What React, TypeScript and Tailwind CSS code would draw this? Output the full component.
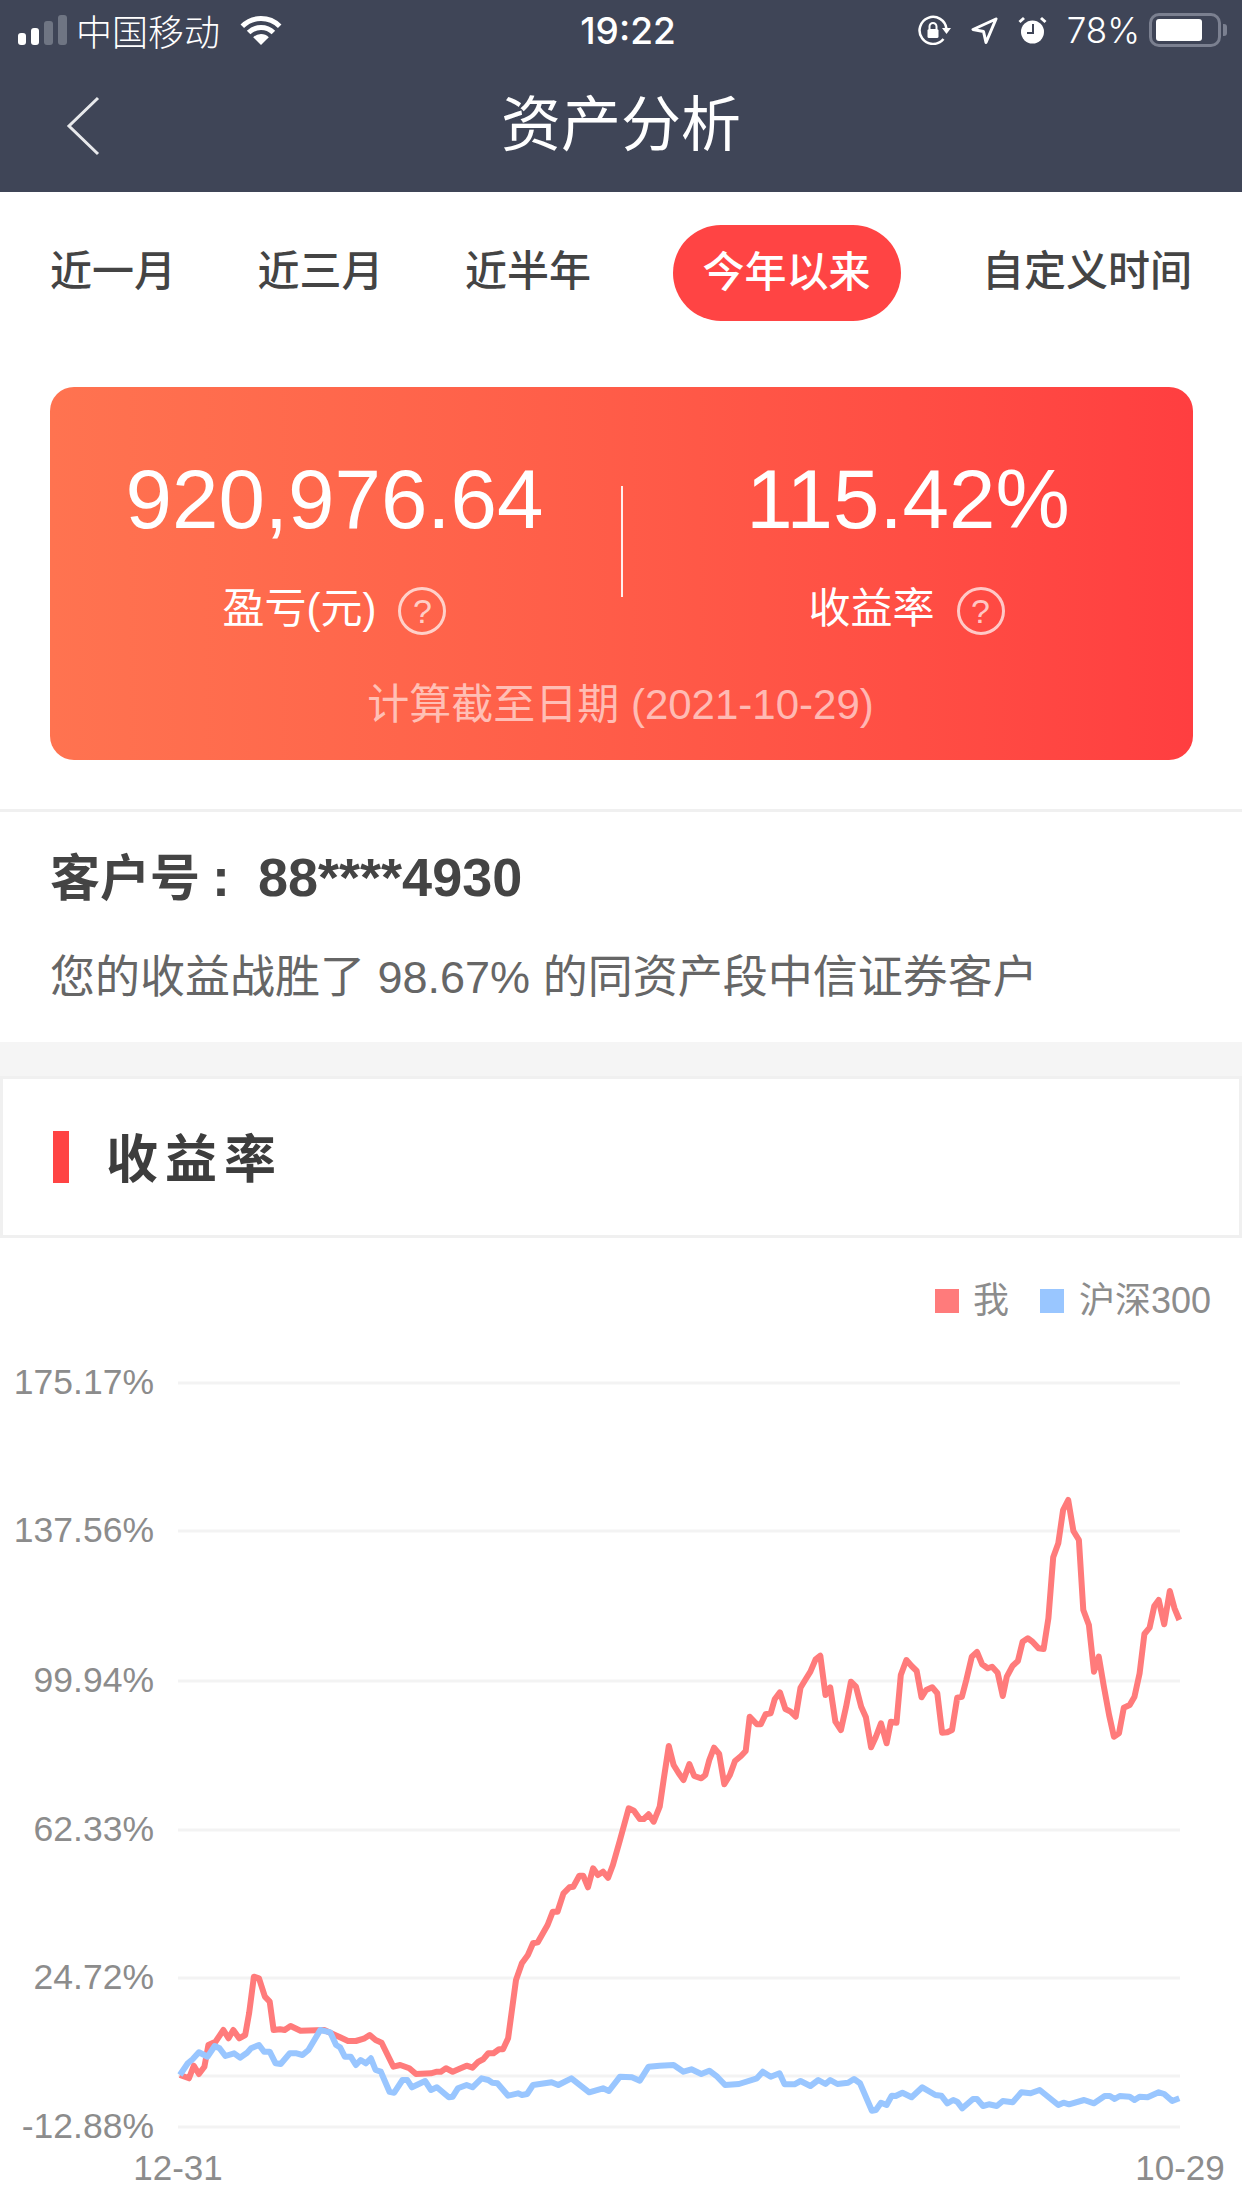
import React from 'react';

type Point = [number, number];

const tabs = ['近一月', '近三月', '近半年', '今年以来', '自定义时间'];
const activeTab = '今年以来';

const gridLines = [
  { y: 1383, label: '175.17%' },
  { y: 1531, label: '137.56%' },
  { y: 1681, label: '99.94%' },
  { y: 1830, label: '62.33%' },
  { y: 1978, label: '24.72%' },
  { y: 2127, label: '-12.88%' },
];

// traced off the reference, in crop coordinates
const redLeft: Point[] = [
  [455, 825], [478, 835], [490, 797], [503, 822], [517, 800], [527, 735], [545, 725], [565, 690], [578, 715], [590, 690],
  [605, 715], [620, 705], [630, 640], [642, 530], [655, 535], [670, 590], [682, 605], [692, 690], [708, 688], [720, 690],
  [735, 678], [760, 692], [820, 690], [860, 712], [880, 723], [900, 723], [920, 716], [935, 705], [950, 720], [965, 728],
  [995, 800], [1012, 795], [1035, 805], [1052, 822], [1090, 820], [1105, 815], [1115, 815], [1128, 805], [1145, 815],
  [1165, 805], [1180, 797], [1195, 803], [1210, 785], [1222, 778], [1235, 760], [1248, 760], [1262, 748], [1272, 748],
  [1285, 715], [1305, 540], [1320, 490], [1335, 465], [1348, 430], [1360, 427], [1385, 375], [1398, 335], [1410, 335],
  [1425, 280], [1440, 262], [1450, 260], [1465, 227], [1475, 227], [1487, 262], [1500, 205], [1512, 225], [1525, 215],
  [1538, 233], [1550, 195],
];

const redRight: Point[] = [
  [0, 1170], [22, 1075], [35, 1082], [50, 1107], [60, 1107], [72, 1093], [85, 1115], [100, 1070], [110, 990], [123, 888],
  [135, 945], [148, 970], [160, 990], [175, 942], [187, 978], [205, 985], [215, 975], [225, 930], [237, 893], [250, 912],
  [263, 1003], [277, 975], [290, 933], [305, 918], [317, 903], [327, 800], [345, 823], [355, 823], [367, 793], [380, 790],
  [390, 748], [403, 727], [417, 777], [430, 785], [443, 800], [455, 713], [467, 690], [480, 665], [493, 628], [505, 617],
  [518, 735], [530, 712], [543, 815], [557, 840], [570, 770], [582, 695], [595, 710], [608, 770], [620, 802], [633, 892],
  [645, 860], [658, 820], [672, 880], [683, 815], [697, 818], [708, 675], [722, 630], [735, 648], [748, 663], [760, 742],
  [772, 720], [787, 712], [800, 730], [812, 848], [825, 847], [837, 840], [850, 743], [862, 740], [873, 690], [887, 620],
  [900, 606], [913, 643], [927, 655], [938, 650], [952, 668], [965, 738], [975, 680], [990, 647], [1003, 633], [1015, 575],
  [1028, 565], [1040, 575], [1055, 595], [1068, 597], [1080, 505], [1092, 322], [1105, 280], [1117, 180], [1130, 150],
  [1143, 243], [1157, 270], [1168, 480], [1182, 525], [1195, 665], [1207, 620], [1220, 710], [1233, 795], [1245, 860],
  [1258, 850], [1270, 773], [1285, 765], [1297, 740], [1310, 670], [1322, 552], [1335, 533], [1347, 468], [1358, 450],
  [1372, 523], [1386, 423], [1398, 475], [1410, 510],
];

const blueLeft: Point[] = [
  [455, 825], [475, 790], [487, 778], [503, 757], [525, 770], [543, 738], [555, 745], [570, 768], [592, 760], [607, 773],
  [625, 758], [635, 745], [655, 735], [668, 755], [682, 755], [697, 790], [710, 792], [733, 760], [750, 760], [765, 765],
  [780, 750], [810, 690], [835, 697], [850, 735], [860, 742], [872, 770], [887, 770], [900, 795], [912, 780], [925, 790],
  [938, 775], [950, 810], [963, 815], [985, 875], [997, 878], [1018, 840], [1030, 840], [1042, 862], [1075, 843], [1090, 870],
  [1105, 862], [1135, 892], [1145, 890], [1158, 865], [1180, 855], [1195, 862], [1218, 835], [1235, 840], [1245, 848],
  [1258, 850], [1285, 887], [1310, 880], [1320, 885], [1333, 882], [1348, 855], [1395, 847], [1412, 855], [1445, 835],
  [1490, 877], [1525, 865], [1540, 873],
];

const blueRight: Point[] = [
  [0, 830], [30, 832], [50, 842], [72, 800], [100, 797], [135, 795], [160, 815], [180, 808], [205, 822], [225, 812],
  [245, 830], [265, 855], [300, 852], [345, 835], [360, 815], [380, 830], [402, 820], [415, 853], [440, 853], [455, 843],
  [480, 858], [500, 840], [518, 852], [530, 840], [548, 852], [575, 848], [590, 837], [605, 850], [635, 932], [645, 930],
  [658, 908], [672, 915], [685, 887], [695, 888], [712, 878], [735, 892], [762, 862], [795, 885], [810, 887], [825, 910],
  [840, 900], [850, 905], [863, 925], [890, 897], [900, 897], [915, 918], [930, 913], [950, 918], [965, 903], [990, 907],
  [1012, 877], [1035, 880], [1058, 870], [1105, 915], [1118, 908], [1132, 913], [1170, 900], [1195, 910], [1222, 888],
  [1235, 888], [1247, 897], [1260, 888], [1285, 890], [1297, 900], [1310, 890], [1330, 892], [1358, 877], [1372, 882],
  [1392, 903], [1410, 895],
];

const toPage = (pts: Point[], scaleX: number, offsetX: number, offsetY: number) =>
  pts.map(([x, y]) => `${(offsetX + x / scaleX).toFixed(1)},${(offsetY + y / 3).toFixed(1)}`).join(' ');

const redLine = `${toPage(redLeft, 2.529, 0, 1800)} ${toPage(redRight, 2.521, 620, 1450)}`;
const blueLine = `${toPage(blueLeft, 2.529, 0, 1800)} ${toPage(blueRight, 2.521, 620, 1800)}`;

function StatusBar() {
  return (
    <div className="flex h-[60px] items-center text-white font-['Inter','Noto_Sans_CJK_SC',sans-serif]">
      <div className="flex w-[576px] items-center pl-[18px]">
        <div className="flex h-[30px] items-end gap-[5px]">
          <span className="h-[12px] w-[8px] rounded-[3px] bg-white" />
          <span className="h-[17px] w-[8px] rounded-[3px] bg-white" />
          <span className="h-[24px] w-[9px] rounded-[3px] bg-[#6f7583]" />
          <span className="h-[30px] w-[9px] rounded-[3px] bg-[#6f7583]" />
        </div>
        <span className="ml-[9px] text-[36px] leading-[44px] font-['Noto_Sans_CJK_SC',sans-serif] font-light">中国移动</span>
        <svg className="ml-[20px]" width="42" height="29" viewBox="0 0 42 29" fill="none">
          <path d="M2.3 10.3A26.5 26.5 0 0 1 39.7 10.3" stroke="white" strokeWidth="5" />
          <path d="M8.6 16.6A17.5 17.5 0 0 1 33.4 16.6" stroke="white" strokeWidth="5" />
          <path d="M21 29L13.2 21.2A11 11 0 0 1 28.8 21.2Z" fill="white" />
        </svg>
      </div>
      <span className="mt-[1px] w-[104px] text-center text-[37px] font-medium leading-[44px]">19:22</span>
      <div className="flex flex-1 items-center justify-end pr-[15px]">
        <svg width="33" height="30" viewBox="0 0 33 30" fill="none">
          <path d="M25.5 24A13.5 13.5 0 1 1 28.5 14" stroke="white" strokeWidth="2.5" />
          <path d="M24 13H33L28.5 19Z" fill="white" />
          <rect x="9.5" y="14" width="11" height="9" rx="1.5" fill="white" />
          <path d="M11.5 14V11.5a3.5 3.5 0 0 1 7 0V14" stroke="white" strokeWidth="2" />
        </svg>
        <svg className="ml-[20px]" width="27" height="27" viewBox="0 0 27 27" fill="none">
          <path d="M25 2L2 12.5L12.5 14.5L15 25.5Z" stroke="white" strokeWidth="3" strokeLinejoin="round" />
        </svg>
        <svg className="ml-[20px]" width="29" height="28" viewBox="0 0 29 28" fill="none">
          <circle cx="14.5" cy="16" r="11.5" fill="white" />
          <path d="M15 8V17H9" stroke="#3f4557" strokeWidth="2" />
          <path d="M1.5 6L6 2M27.5 6L23 2" stroke="white" strokeWidth="3" />
        </svg>
        <span className="ml-[20px] text-[35px] font-light leading-[44px]">78%</span>
        <div className="ml-[9px] flex h-[34px] w-[72px] items-center rounded-[10px] border-[3px] border-[#7b8090] pl-[4px]">
          <span className="h-[22px] w-[46px] rounded-[3px] bg-white" />
        </div>
        <span className="ml-[2px] h-[12px] w-[4px] rounded-r-[3px] bg-[#7b8090]" />
      </div>
    </div>
  );
}

function NavBar() {
  return (
    <div className="grid h-[132px] grid-cols-[1fr_auto_1fr] items-center">
      <svg className="ml-[66px]" width="34" height="60" viewBox="0 0 34 60" fill="none">
        <path d="M32 2L3 30L32 58" stroke="#e8e9ec" strokeWidth="3" />
      </svg>
      <h1 className="text-[60px] font-normal leading-[80px] text-white">资产分析</h1>
      <div />
    </div>
  );
}

function Tabs() {
  return (
    <div className="flex items-center justify-between px-[50px] pt-[33px]">
      {tabs.map((tab) =>
        tab === activeTab ? (
          <span key={tab} className="flex h-[96px] w-[228px] items-center justify-center rounded-full bg-[#ff4444] pb-[2px] text-[42px] font-medium text-white">
            {tab}
          </span>
        ) : (
          <span key={tab} className="pb-[2px] text-[42px] font-medium leading-[94px] text-[#444444]">
            {tab}
          </span>
        )
      )}
    </div>
  );
}

function HelpIcon() {
  return (
    <span className="flex h-[48px] w-[48px] items-center justify-center rounded-full border-[3px] border-white/70 text-[34px] leading-none text-white/70">
      ?
    </span>
  );
}

function SummaryCard() {
  return (
    <div className="ml-[50px] mt-[66px] h-[373px] w-[1143px] rounded-[24px] bg-linear-to-r from-[#ff7350] to-[#ff3e40] pt-[62px] text-white">
      <div className="flex">
        <div className="flex w-[571px] flex-none flex-col items-center pr-[2px]">
          <div className="text-[83.5px] leading-[100px]">920,976.64</div>
          <div className="mt-[38px] flex h-[48px] items-center gap-[22px]">
            <span className="-mt-[5px] text-[42px] leading-[48px]">盈亏(元)</span>
            <HelpIcon />
          </div>
        </div>
        <div className="mt-[37px] h-[111px] w-[2px] bg-white/90" />
        <div className="flex flex-1 flex-col items-center pr-[3px]">
          <div className="ml-[3px] text-[83.5px] leading-[100px]">115.42%</div>
          <div className="mt-[38px] flex h-[48px] items-center gap-[22px]">
            <span className="-mt-[5px] text-[42px] leading-[48px]">收益率</span>
            <HelpIcon />
          </div>
        </div>
      </div>
      <div className="mt-[45px] pr-[2px] text-center text-[42px] leading-[50px] text-white/60">计算截至日期 (2021-10-29)</div>
    </div>
  );
}

function CustomerInfo() {
  return (
    <div className="mt-[49px] h-[233px] border-t-[3px] border-[#f0f0f0] px-[50px] pt-[32px]">
      <div className="flex items-baseline text-[50px] font-bold leading-[66px] text-[#444444]">
        <span>客户号</span>
        <span className="ml-[12px] text-[54px]">:</span>
        <span className="ml-[28px] text-[54px]">88****4930</span>
      </div>
      <div className="mt-[34px] text-[45px] leading-[64px] text-[#666666]">您的收益战胜了 98.67% 的同资产段中信证券客户</div>
    </div>
  );
}

function SectionTitle() {
  return (
    <div className="flex h-[162px] items-center border-[3px] border-[#f0f0f0] pl-[50px]">
      <span className="h-[52px] w-[16px] bg-[#ff4444]" />
      <h2 className="ml-[37px] mt-[6px] text-[52px] font-bold leading-[60px] tracking-[7px] text-[#3d3d3d]">收益率</h2>
    </div>
  );
}

function Legend() {
  return (
    <div className="mt-[43px] flex h-[40px] items-center justify-end pr-[31px] text-[36px] leading-[40px] text-[#8c8c8c]">
      <span className="h-[24px] w-[24px] bg-[#ff7b7b]" />
      <span className="ml-[14px]">我</span>
      <span className="ml-[31px] h-[24px] w-[24px] bg-[#99c6ff]" />
      <span className="ml-[15px]">沪深300</span>
    </div>
  );
}

function ReturnChart() {
  return (
    <svg className="block" width="1242" height="887" viewBox="0 1321 1242 887" fill="none">
      {gridLines.map((line) => (
        <g key={line.label}>
          <line x1="178" x2="1180" y1={line.y} y2={line.y} stroke="#f3f3f3" strokeWidth="3" />
          <text x="154" y={line.y + 11} textAnchor="end" fontSize="35.5" fill="#8c8c8c">
            {line.label}
          </text>
        </g>
      ))}
      <line x1="178" x2="1180" y1="2076" y2="2076" stroke="#f3f3f3" strokeWidth="3" />
      <polyline points={redLine} stroke="#ff7b7b" strokeWidth="6" strokeLinejoin="round" />
      <polyline points={blueLine} stroke="#99c6ff" strokeWidth="6" strokeLinejoin="round" />
      <text x="178" y="2180" textAnchor="middle" fontSize="35" fill="#8c8c8c">12-31</text>
      <text x="1180" y="2180" textAnchor="middle" fontSize="35" fill="#8c8c8c">10-29</text>
    </svg>
  );
}

export default function App() {
  return (
    <div className="h-[2208px] w-[1242px] overflow-hidden bg-white font-['Liberation_Sans','Noto_Sans_CJK_SC',sans-serif]">
      <div className="bg-[#3f4557]">
        <StatusBar />
        <NavBar />
      </div>
      <Tabs />
      <SummaryCard />
      <CustomerInfo />
      <div className="h-[34px] bg-[#f5f5f5]" />
      <SectionTitle />
      <Legend />
      <ReturnChart />
    </div>
  );
}
